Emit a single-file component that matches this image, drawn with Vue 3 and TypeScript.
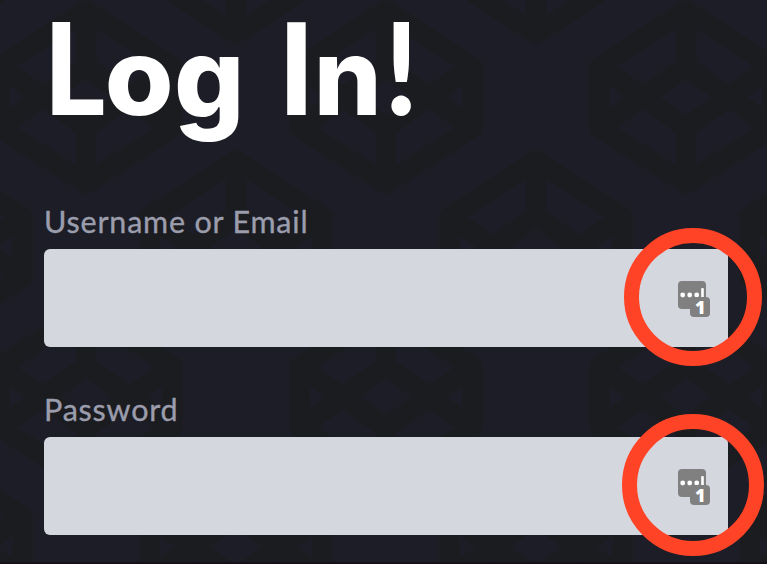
<script setup lang="ts">
interface Field {
  id: string
  label: string
  type: string
  size: string
}

const fields: Field[] = [
  { id: 'username', label: 'Username or Email', type: 'text', size: 'small' },
  { id: 'password', label: 'Password', type: 'password', size: 'large' },
]
</script>

<template>
  <main class="page">
    <svg class="pattern" width="767" height="564" aria-hidden="true">
      <defs>
        <g id="cube" fill="none" stroke="#1b1c20" stroke-width="20.5" stroke-linejoin="round">
          <path d="M0-86.5 86.5-30.5V30.5L0 86.5-86.5 30.5V-30.5ZM0-86.5V-30.5L-86.5 30.5M0-30.5 86.5 30.5M0 86.5V30.5L-86.5-30.5M0 30.5 86.5-30.5" />
        </g>
        <pattern id="cubes" x="-64" y="-53" width="300" height="300" patternUnits="userSpaceOnUse">
          <use href="#cube" x="0" y="0" />
          <use href="#cube" x="300" y="0" />
          <use href="#cube" x="0" y="300" />
          <use href="#cube" x="300" y="300" />
          <use href="#cube" x="150" y="150" />
        </pattern>
      </defs>
      <rect width="767" height="564" fill="url(#cubes)" />
    </svg>
    <form class="form" @submit.prevent>
      <h1 class="title"><span class="cap-l">L</span><span class="low-o">o</span><span class="low-g">g</span> <span class="cap-i">I</span><span class="low-n">n</span><span class="mark">!</span></h1>
      <div v-for="field in fields" :key="field.id" class="field">
        <label class="label" :for="field.id">{{ field.label }}</label>
        <div class="control">
          <input :id="field.id" class="input" :type="field.type" />
          <svg class="manager" width="32" height="36" viewBox="0 0 32 36">
            <rect width="28" height="28" rx="4" fill="#808080" />
            <g fill="#fff">
              <circle cx="4.7" cy="14" r="2.4" />
              <circle cx="11.7" cy="14" r="2.4" />
              <circle cx="18.7" cy="14" r="2.4" />
              <rect x="23.2" y="7" width="2.6" height="10" rx="1" />
            </g>
            <rect x="12" y="16" width="20" height="20" rx="4" fill="#808080" />
            <text class="count" x="22.3" y="33" text-anchor="middle">1</text>
          </svg>
          <span class="ring" :class="field.size"></span>
        </div>
      </div>
    </form>
  </main>
</template>

<style>
body {
  background: #1c1d26;
  overflow: hidden;
}
</style>

<style scoped>
.page {
  position: relative;
  box-sizing: border-box;
  width: 767px;
  height: 564px;
  overflow: hidden;
  border-bottom: 2px solid #15101a;
  background: #1c1d26;
  font-family: Lato, sans-serif;
}
.pattern {
  position: absolute;
  inset: 0;
}
.form {
  position: relative;
  padding: 0 39px 0 44px;
}
.title {
  height: 199px;
  margin: 0;
  color: #fff;
  font-size: 128px;
  font-weight: 900;
  line-height: 132px;
  white-space: nowrap;
}
.title span {
  display: inline-block;
  line-height: 0;
}
.cap-l {
  margin: 0 -4px 0 -1px;
  transform: scaleX(0.92);
  transform-origin: 7px 0;
}
.low-o,
.low-g,
.low-n {
  font-family: Inter, sans-serif;
  font-size: 107px;
  font-weight: 800;
}
.low-o {
  transform: scaleX(1.04);
}
.low-g {
  margin-left: 3px;
  transform: scale(1.03, 1.04);
  transform-origin: 50% -30px;
}
.cap-i {
  margin-left: 3px;
  transform: scaleX(0.95);
}
.low-n {
  margin-left: -2px;
}
.mark {
  margin-left: 1px;
  transform: scaleX(0.93);
}
.field {
  height: 188px;
}
.label {
  display: block;
  height: 50px;
  color: #9b9dad;
  font-size: 30.5px;
  line-height: 44px;
  letter-spacing: 0.8px;
  -webkit-text-stroke: 0.35px #9b9dad;
}
.control {
  position: relative;
  height: 98px;
}
.input {
  display: block;
  box-sizing: border-box;
  width: 100%;
  height: 98px;
  padding: 0 80px 0 20px;
  border: 0;
  border-radius: 6px;
  background: #d5d7df;
  font-size: 30px;
  outline: none;
}
.manager {
  position: absolute;
  top: 32px;
  right: 18px;
  overflow: visible;
}
.count {
  fill: #fff;
  font: 800 18px "Open Sans", sans-serif;
}
.ring {
  position: absolute;
  box-sizing: border-box;
  border: 15px solid #ff4326;
  border-radius: 50%;
  pointer-events: none;
}
.small {
  top: -21.5px;
  right: -34px;
  width: 138px;
  height: 138px;
}
.large {
  top: -23.5px;
  right: -36px;
  width: 142px;
  height: 142px;
}
</style>
